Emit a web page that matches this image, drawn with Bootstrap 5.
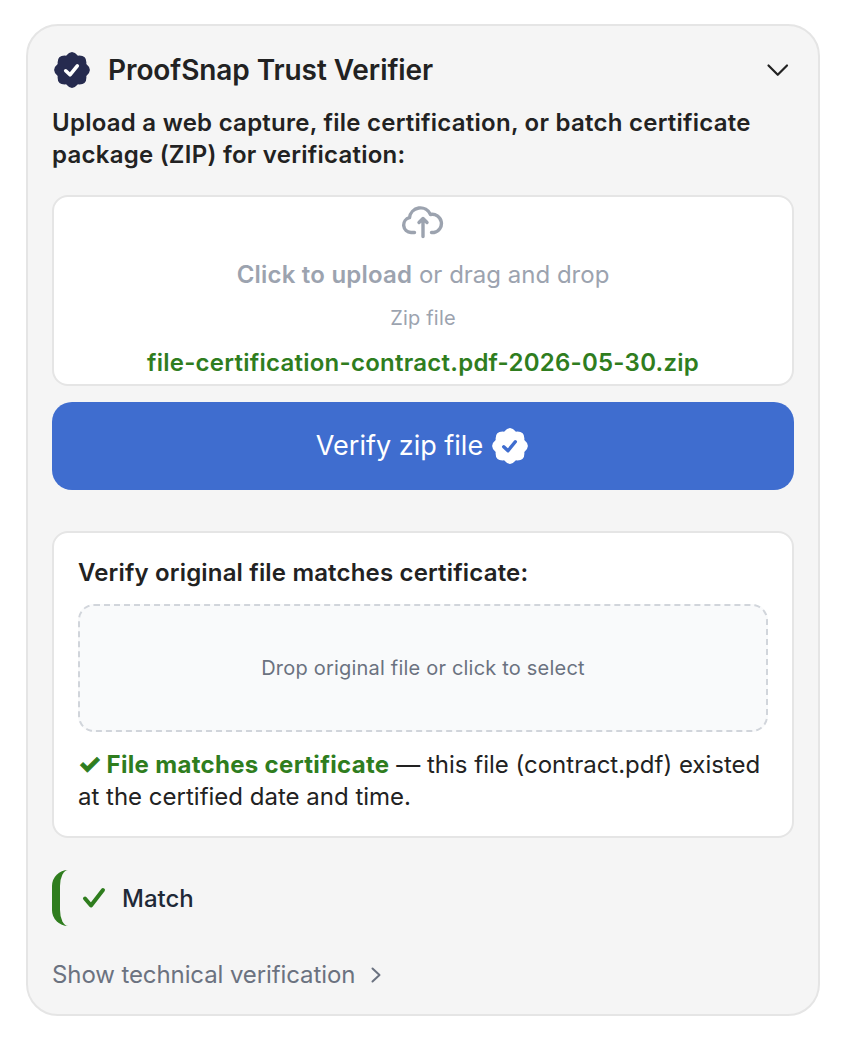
<!DOCTYPE html>
<html lang="en">
<head>
<meta charset="utf-8">
<title>ProofSnap Trust Verifier</title>
<link href="https://cdn.jsdelivr.net/npm/bootstrap@5.3.0/dist/css/bootstrap.min.css" rel="stylesheet">
<style>
html, body { background: #fff; }
body { font-family: Inter, "Liberation Sans", sans-serif; color: #222; margin: 0; padding: 24px 26px; }
.ps-panel { width: 794px; height: 992px; background: #f5f5f5; border: 2px solid #e5e5e5; border-radius: 32px; padding: 24px; }
.ps-head { height: 40px; margin-bottom: 17px; }
.ps-badge { margin-left: 2px; }
.ps-title { font-size: 28px; font-weight: 600; line-height: 32px; letter-spacing: -.08px; color: #222; margin: 0; padding-left: 18px; }
.ps-intro { font-size: 24px; font-weight: 600; line-height: 32px; letter-spacing: .25px; margin: 0 0 24px; }
.ps-upload { background: #fff; border: 2px solid #e5e5e5; border-radius: 16px; height: 191px; }
.ps-upload-main { font-size: 24px; line-height: 32px; color: #9ca3af; margin-top: 20px; }
.ps-upload-main b { font-weight: 600; letter-spacing: .21px; }
.ps-upload-sub { font-size: 20px; line-height: 28px; color: #9ca3af; letter-spacing: .2px; margin-top: 13px; }
.ps-upload-name { font-size: 24px; font-weight: 600; line-height: 32px; letter-spacing: .25px; color: #2f7d1e; margin-top: 15px; }
.ps-btn { display: flex; width: 100%; height: 88px; margin-top: 16px; background: #3f6dcf; border: 0; border-radius: 20px; color: #fff; font-size: 27px; line-height: 32px; gap: 9px; padding-right: 14px; }
.ps-btn:hover, .ps-btn:active { background: #3f6dcf; color: #fff; }
.ps-match-card { background: #fff; border: 2px solid #e5e5e5; border-radius: 16px; height: 307px; margin-top: 41px; padding: 24px 24px 24px; }
.ps-match-title { font-size: 24px; font-weight: 600; line-height: 32px; letter-spacing: .17px; margin: 0 0 15px; }
.ps-drop { height: 128px; background: #f9fafb; border: 2px dashed #d1d5db; border-radius: 16px; font-size: 20px; letter-spacing: .2px; color: #6b7280; }
.ps-result { font-size: 24px; line-height: 32px; margin: 17px 0 0; color: #222; }
.ps-result b { font-weight: 700; color: #2f7d1e; letter-spacing: .32px; }
.ps-tick { color: #2f7d1e; -webkit-text-stroke: 1px #2f7d1e; font-size: 26px; line-height: 1; font-weight: 700; letter-spacing: -1.200px; }
.ps-status { height: 56px; margin-top: 32px; border-left: 8px solid #2f7d1e; border-radius: 16px; padding-left: 22px; gap: 16px; font-size: 24px; font-weight: 500; color: #1f2937; }
.ps-status span { padding-top: 2px; }
.ps-more { font-size: 24px; line-height: 32px; letter-spacing: -.1px; color: #6b7280; margin-top: 33px; gap: 16px; }
</style>
</head>
<body>
<div class="ps-panel d-flex flex-column">
  <div class="ps-head d-flex align-items-center justify-content-between flex-shrink-0">
    <div class="d-flex align-items-center">
      <svg width="36" height="36" viewBox="0 0 36 36" class="flex-shrink-0 ps-badge" aria-hidden="true">
        <path fill="#262b4f" d="M12.070 3.680Q18 -3.500 23.930 3.680Q33.200 2.800 32.320 12.070Q39.500 18 32.320 23.930Q33.200 33.200 23.930 32.320Q18 39.500 12.070 32.320Q2.800 33.200 3.680 23.930Q-3.500 18 3.680 12.070Q2.800 2.800 12.070 3.680z"/>
        <path fill="none" stroke="#fff" stroke-width="3.600" stroke-linecap="round" stroke-linejoin="round" d="M11.700 18.800l4.300 4 7.300-9"/>
      </svg>
      <h1 class="ps-title">ProofSnap Trust Verifier</h1>
    </div>
    <svg width="26" height="16" viewBox="0 0 26 16" class="me-1" aria-hidden="true"><path fill="none" stroke="#222" stroke-width="2.200" stroke-linecap="round" stroke-linejoin="round" d="M4.500 3.500l9.250 9.250L23 3.500"/></svg>
  </div>
  <p class="ps-intro flex-shrink-0">Upload a web capture, file certification, or batch certificate package (ZIP) for verification:</p>
  <div class="ps-upload text-center flex-shrink-0">
    <svg width="42" height="34" viewBox="0 0 42 34" class="d-block mx-auto mt-2" aria-hidden="true">
      <path fill="none" stroke="#9ca3af" stroke-width="3.400" stroke-linecap="round" stroke-linejoin="round" d="M12.500 27.500H9A7.500 7.500 0 0 1 7.500 12.700A11 11 0 0 1 28.500 9.500A9 9 0 0 1 32 27.500H29.500"/>
      <path fill="none" stroke="#9ca3af" stroke-width="3.400" stroke-linecap="round" stroke-linejoin="round" d="M21 31.500V13.500M17 17.500l4-4 4 4"/>
    </svg>
    <div class="ps-upload-main"><b>Click to upload</b> or drag and drop</div>
    <div class="ps-upload-sub">Zip file</div>
    <div class="ps-upload-name">file-certification-contract.pdf-2026-05-30.zip</div>
  </div>
  <button type="button" class="btn ps-btn align-items-center justify-content-center flex-shrink-0">
    Verify zip file
    <svg width="36" height="36" viewBox="0 0 36 36" aria-hidden="true">
      <path fill="#fff" d="M12.070 3.680Q18 -3.500 23.930 3.680Q33.200 2.800 32.320 12.070Q39.500 18 32.320 23.930Q33.200 33.200 23.930 32.320Q18 39.500 12.070 32.320Q2.800 33.200 3.680 23.930Q-3.500 18 3.680 12.070Q2.800 2.800 12.070 3.680z"/>
      <path fill="none" stroke="#3f6dcf" stroke-width="3.400" stroke-linecap="round" stroke-linejoin="round" d="M11.700 18.800l4.300 4 7.300-9"/>
    </svg>
  </button>
  <div class="ps-match-card flex-shrink-0">
    <p class="ps-match-title">Verify original file matches certificate:</p>
    <div class="ps-drop d-flex align-items-center justify-content-center">Drop original file or click to select</div>
    <p class="ps-result"><span class="ps-tick">✓</span> <b>File matches certificate</b> — this file (contract.pdf) existed at the certified date and time.</p>
  </div>
  <div class="ps-status d-flex align-items-center flex-shrink-0">
    <svg width="24" height="22" viewBox="0 0 24 22" aria-hidden="true"><path fill="none" stroke="#2f7d1e" stroke-width="4" stroke-linecap="round" stroke-linejoin="round" d="M3 11.500l6 7L21 3"/></svg>
    <span>Match</span>
  </div>
  <div class="ps-more d-flex align-items-center flex-shrink-0">
    <span>Show technical verification</span>
    <svg width="10" height="16" viewBox="0 0 10 16" aria-hidden="true"><path fill="none" stroke="#6b7280" stroke-width="2" stroke-linecap="round" stroke-linejoin="round" d="M1.500 1.500l7 6.500-7 6.500"/></svg>
  </div>
</div>
<script src="https://cdn.jsdelivr.net/npm/bootstrap@5.3.0/dist/js/bootstrap.bundle.min.js"></script>
</body>
</html>
